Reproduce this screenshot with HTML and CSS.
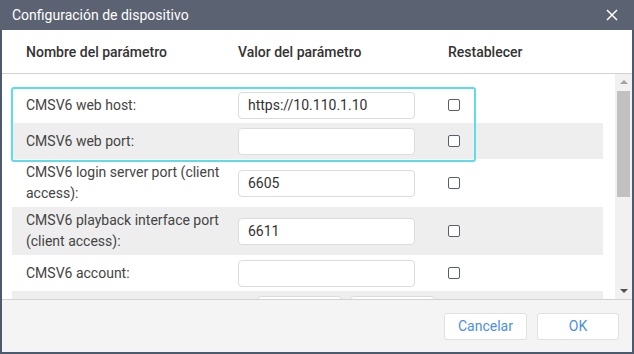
FILE: index.html
```html
<!DOCTYPE html>
<html>
<head>
<meta charset="utf-8">
<link rel="stylesheet" href="styles.css">
</head>
<body>
<div class="dialog">
  <div class="titlebar">
    <span class="title">Configuración de dispositivo</span>
    <svg class="close" width="12" height="12" viewBox="0 0 12 12"><path d="M1 1L11 11M11 1L1 11" stroke="#fff" stroke-width="1.5" fill="none"/></svg>
  </div>
  <div class="thead">
    <div>Nombre del parámetro</div>
    <div>Valor del parámetro</div>
    <div>Restablecer</div>
  </div>
  <div class="body">
    <div class="content">
      <div class="rows">
        <div class="row">
          <div class="label">CMSV6 web host:</div>
          <div class="input">https://10.110.1.10</div>
          <div class="cb"></div>
        </div>
        <div class="row alt">
          <div class="label">CMSV6 web port:</div>
          <div class="input"></div>
          <div class="cb"></div>
        </div>
        <div class="row tall">
          <div class="label">CMSV6 login server port (client access):</div>
          <div class="input">6605</div>
          <div class="cb"></div>
        </div>
        <div class="row alt tall">
          <div class="label">CMSV6 playback interface port (client access):</div>
          <div class="input">6611</div>
          <div class="cb"></div>
        </div>
        <div class="row">
          <div class="label">CMSV6 account:</div>
          <div class="input"></div>
          <div class="cb"></div>
        </div>
        <div class="row alt partial">
          <div class="label"></div>
          <div class="pair"><div class="small"></div><div class="small"></div></div>
        </div>
        <div class="highlight"></div>
      </div>
    </div>
    <div class="scrollbar">
      <div class="arrow up"></div>
      <div class="thumb"></div>
      <div class="track"></div>
      <div class="arrow down"></div>
    </div>
  </div>
  <div class="footer">
    <button class="btn">Cancelar</button>
    <button class="btn">OK</button>
  </div>
</div>
</body>
</html>
```
FILE: styles.css
```css
* { box-sizing: border-box; }
html, body { margin: 0; padding: 0; }
body {
  width: 634px;
  height: 354px;
  overflow: hidden;
  font-family: Roboto, "Liberation Sans", sans-serif;
  background: #fff;
}
.dialog {
  width: 634px;
  height: 354px;
  border: 2px solid #4d596d;
  border-top: none;
  display: flex;
  flex-direction: column;
  background: #fff;
}
.titlebar {
  height: 30px;
  flex: none;
  background: #5b6271;
  display: flex;
  align-items: center;
  justify-content: space-between;
  margin: 0 -2px;
  padding: 0 16px 0 12px;
}
.title {
  color: #fff;
  font-size: 14px;
}
.thead {
  height: 44px;
  flex: none;
  display: grid;
  grid-template-columns: 212px 210px auto;
  align-items: center;
  padding-left: 24px;
  border-bottom: 1px solid #d2d2d2;
  font-size: 14px;
  font-weight: 500;
  color: #333;
}
.body {
  height: 225px;
  flex: none;
  display: flex;
  overflow: hidden;
}
.content {
  flex: 1;
  overflow: hidden;
  padding: 13px 12px 0 10px;
}
.rows { position: relative; }
.row {
  height: 36px;
  display: grid;
  grid-template-columns: 212px 177px auto;
  align-items: center;
  padding-left: 14px;
  font-size: 14px;
  color: #444;
}
.row.tall { height: 48px; }
.row.alt { background: #eeeeee; }
.label { line-height: 21px; }
.input {
  height: 27px;
  border: 1px solid #dcdcdc;
  border-radius: 4px;
  background: #fff;
  padding-left: 9px;
  line-height: 25px;
  color: #333;
}
.cb {
  width: 12px;
  height: 12px;
  border: 1.5px solid #565e6c;
  border-radius: 2px;
  margin-left: 33px;
  background: #fff;
}
.row.partial { align-items: start; }
.pair {
  grid-column: 2 / 4;
  display: flex;
  gap: 8px;
  margin-left: 19px;
  margin-top: 5px;
}
.small {
  flex: none;
  width: 85px;
  height: 27px;
  border: 1px solid #dcdcdc;
  border-radius: 4px;
  background: #fff;
}
.highlight {
  position: absolute;
  left: -1px;
  top: 0;
  width: 465px;
  height: 75px;
  border: 2px solid #5fdcec;
  border-radius: 3px;
  pointer-events: none;
}
.scrollbar {
  width: 17px;
  flex: none;
  background: #f1f1f1;
  display: flex;
  flex-direction: column;
  align-items: center;
}
.arrow {
  width: 0; height: 0;
  border-left: 4px solid transparent;
  border-right: 4px solid transparent;
}
.arrow.up { border-bottom: 4px solid #a3a3a3; margin-top: 6px; margin-bottom: 7px; }
.arrow.down { border-top: 4px solid #505050; margin-bottom: 6px; }
.thumb {
  width: 13px;
  height: 106px;
  background: #c1c1c1;
}
.track { flex: 1; }
.footer {
  flex: 1;
  background: #f4f4f4;
  border-top: 1px solid #d2d2d2;
  display: flex;
  align-items: center;
  justify-content: flex-end;
  gap: 10px;
  padding-right: 13px;
}
.btn {
  height: 27px;
  width: 83px;
  border: 1px solid #e0e0e0;
  border-radius: 3px;
  background: #fff;
  color: #4a8fe6;
  font-family: Roboto, "Liberation Sans", sans-serif;
  font-size: 14px;
  padding: 0;
}
.btn + .btn { width: 82px; }
```
